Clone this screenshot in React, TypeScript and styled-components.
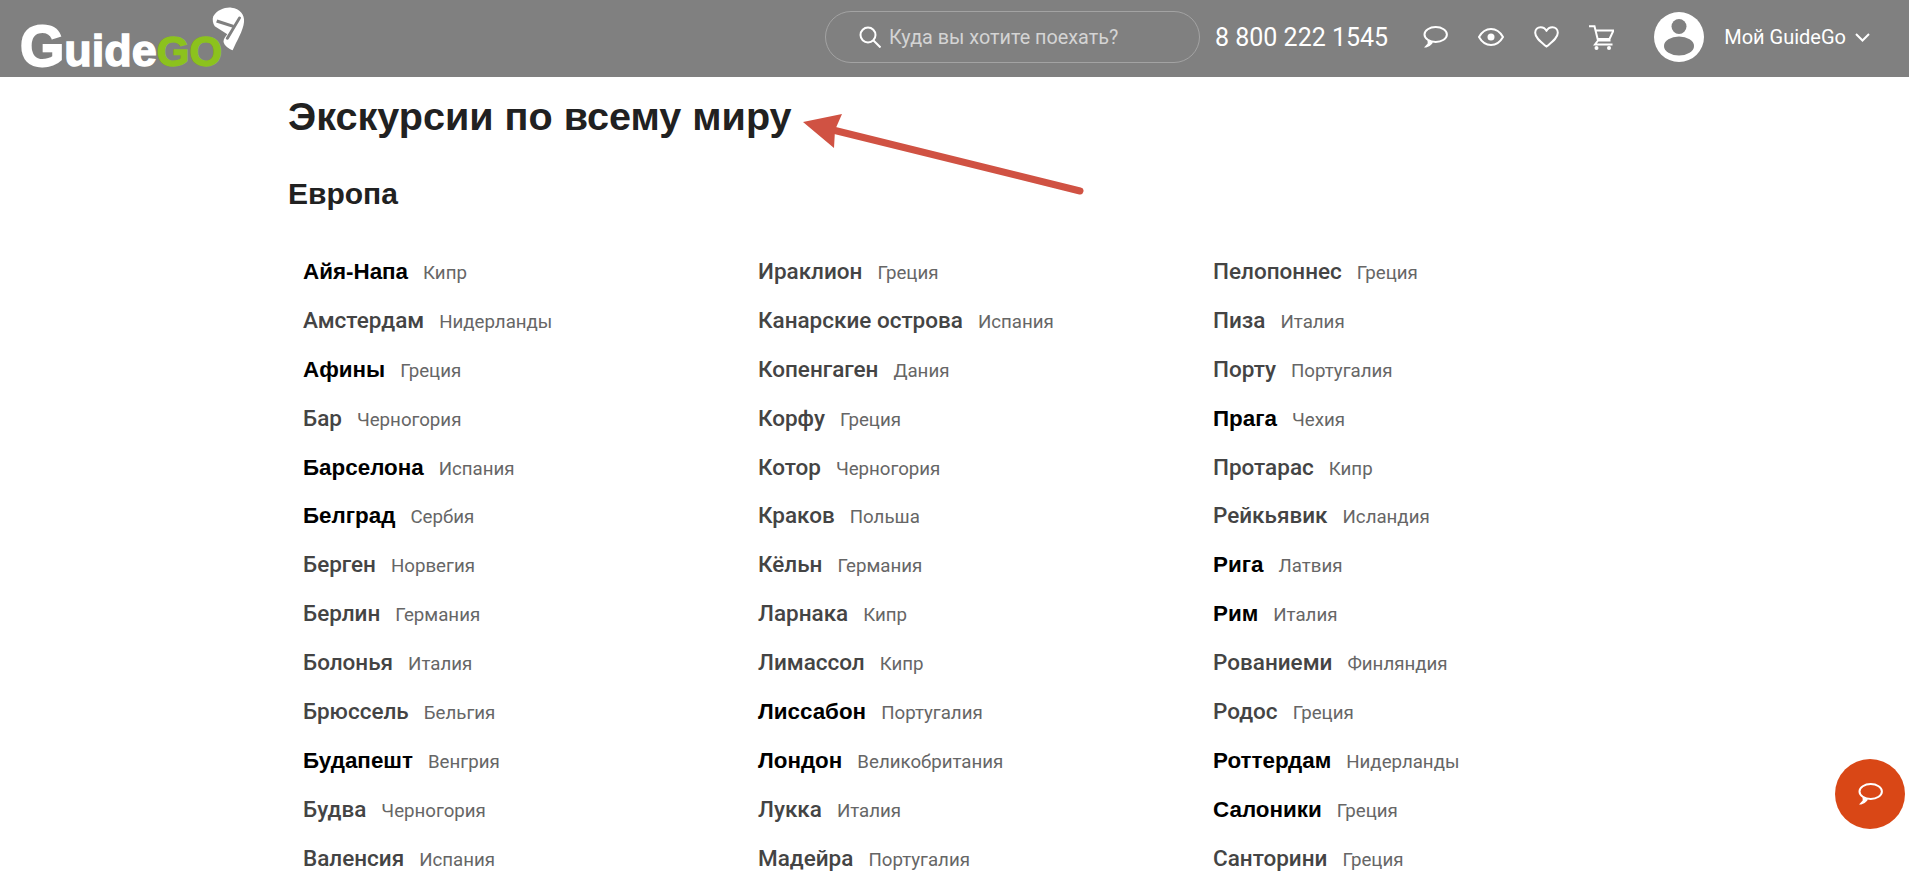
import React from 'react';
import styled, { createGlobalStyle } from 'styled-components';

const GlobalStyle = createGlobalStyle`
    html, body {
        margin: 0;
        height: 100%;
        overflow: hidden;
        background: #fff;
        font-family: Roboto, "Liberation Sans", sans-serif;
    }
`;

const Header = styled.header`
    height: 77px;
    box-sizing: border-box;
    background: #808080;
    display: flex;
    align-items: center;
    padding: 0 0 3px 20px;
    color: #fff;
`;

const Logo = styled.a`
    position: relative;
    display: flex;
    align-items: baseline;
    width: 225px;
    height: 66px;
    padding-top: 18px;
    box-sizing: border-box;
    font-family: "Liberation Sans", Arial, sans-serif;
    font-weight: 700;
    color: #fff;
`;

const LogoBig = styled.span`
    font-size: 57px;
    line-height: 48px;
    -webkit-text-stroke: 2px currentColor;
`;

const LogoSmall = styled.span<{ $green?: boolean }>`
    font-size: ${({ $green }) => ($green ? '42px' : '45px')};
    line-height: 48px;
    -webkit-text-stroke: 1.4px currentColor;
    color: ${({ $green }) => ($green ? '#8cc21d' : '#fff')};
`;

const LogoPin = styled.svg`
    position: absolute;
    left: 183px;
    top: -3px;
`;

const Search = styled.div`
    width: 375px;
    height: 52px;
    box-sizing: border-box;
    margin-left: 580px;
    border: 1px solid #a3a3a3;
    border-radius: 26px;
    display: flex;
    align-items: center;
    gap: 8px;
    padding-left: 33px;
`;

const SearchText = styled.span`
    font-size: 19.800px;
    color: #d4d4d4;
`;

const Phone = styled.span`
    margin-left: 15px;
    font-size: 25px;
    white-space: nowrap;
`;

const Icons = styled.div`
    display: flex;
    align-items: center;
    gap: 30px;
    margin-left: 35px;
`;

const Avatar = styled.svg`
    margin-left: 40px;
    flex: none;
`;

const Account = styled.span`
    margin-left: 20px;
    font-size: 20px;
    white-space: nowrap;
`;

const Chevron = styled.svg`
    margin-left: 9px;
`;

const Main = styled.main`
    width: 1320px;
    margin-left: 288px;
`;

const Title = styled.h1`
    margin: 0;
    padding-top: 15px;
    font-family: "Liberation Sans", Arial, sans-serif;
    font-size: 39.600px;
    line-height: 48px;
    font-weight: 700;
    color: #212121;
`;

const Region = styled.h2`
    margin: 0;
    padding-top: 34px;
    font-family: "Liberation Sans", Arial, sans-serif;
    font-size: 30px;
    line-height: 40px;
    font-weight: 700;
    color: #212121;
`;

const Columns = styled.div`
    display: grid;
    grid-template-columns: repeat(3, 455px);
    padding: 33px 0 0 15px;
`;

const City = styled.div`
    height: 48.900px;
    display: flex;
    align-items: baseline;
    gap: 15px;
    white-space: nowrap;
`;

const CityName = styled.a<{ $top?: boolean }>`
    font-family: ${({ $top }) => ($top ? '"Liberation Sans", Arial, sans-serif' : 'Roboto, sans-serif')};
    font-size: ${({ $top }) => ($top ? '22.400px' : '22.500px')};
    line-height: 49px;
    font-weight: ${({ $top }) => ($top ? 700 : 500)};
    color: ${({ $top }) => ($top ? '#000' : '#444')};
`;

const Country = styled.span`
    font-size: 18.700px;
    color: #666;
`;

const Arrow = styled.svg`
    position: absolute;
    left: 789px;
    top: 109px;
`;

const ChatButton = styled.button`
    position: fixed;
    right: 4px;
    bottom: 52px;
    width: 70px;
    height: 70px;
    border: 0;
    padding: 0;
    border-radius: 50%;
    background: #d94716;
    display: flex;
    align-items: center;
    justify-content: center;
`;

const Bubble = () => (
    <svg width="25" height="22" viewBox="0 0 25 22" fill="none">
        <ellipse cx="12.700" cy="8.500" rx="11.200" ry="7.400" stroke="#fff" strokeWidth="2" />
        <path d="M4.500 14L4.700 17.500 1 21.500C4 21.500 7 20.500 10 16.400z" fill="#fff" />
    </svg>
);

type Place = [string, string, boolean?];

const columns: Place[][] = [
    [
        ['Айя-Напа', 'Кипр', true],
        ['Амстердам', 'Нидерланды'],
        ['Афины', 'Греция', true],
        ['Бар', 'Черногория'],
        ['Барселона', 'Испания', true],
        ['Белград', 'Сербия', true],
        ['Берген', 'Норвегия'],
        ['Берлин', 'Германия'],
        ['Болонья', 'Италия'],
        ['Брюссель', 'Бельгия'],
        ['Будапешт', 'Венгрия', true],
        ['Будва', 'Черногория'],
        ['Валенсия', 'Испания'],
    ],
    [
        ['Ираклион', 'Греция'],
        ['Канарские острова', 'Испания'],
        ['Копенгаген', 'Дания'],
        ['Корфу', 'Греция'],
        ['Котор', 'Черногория'],
        ['Краков', 'Польша'],
        ['Кёльн', 'Германия'],
        ['Ларнака', 'Кипр'],
        ['Лимассол', 'Кипр'],
        ['Лиссабон', 'Португалия', true],
        ['Лондон', 'Великобритания', true],
        ['Лукка', 'Италия'],
        ['Мадейра', 'Португалия'],
    ],
    [
        ['Пелопоннес', 'Греция'],
        ['Пиза', 'Италия'],
        ['Порту', 'Португалия'],
        ['Прага', 'Чехия', true],
        ['Протарас', 'Кипр'],
        ['Рейкьявик', 'Исландия'],
        ['Рига', 'Латвия', true],
        ['Рим', 'Италия', true],
        ['Рованиеми', 'Финляндия'],
        ['Родос', 'Греция'],
        ['Роттердам', 'Нидерланды', true],
        ['Салоники', 'Греция', true],
        ['Санторини', 'Греция'],
    ],
];

export default function App() {
    return (
        <>
            <GlobalStyle />
            <Header>
                <Logo>
                    <LogoBig>G</LogoBig>
                    <LogoSmall>uide</LogoSmall>
                    <LogoSmall $green>GO</LogoSmall>
                    <LogoPin width="57" height="54" viewBox="0 0 150 162" preserveAspectRatio="none">
                        <path
                            d="M27 46C38 26 58 18 75 20c22 2 35 22 33 42-2 28-20 58-30 86-9-4-23-15-24-26 0-9 5-15 10-22L31 76c-5-8-7-20-4-30z"
                            fill="#fff"
                        />
                        <path d="M96 51L64 112" stroke="#808080" strokeWidth="8" strokeLinecap="round" />
                        <path d="M36 60L80 76" stroke="#808080" strokeWidth="9" />
                    </LogoPin>
                </Logo>
                <Search>
                    <svg width="22" height="22" viewBox="0 0 22 22" fill="none" stroke="#fff" strokeWidth="2">
                        <circle cx="9" cy="9" r="7.500" />
                        <path d="M14.500 14.500L21.500 21.500" />
                    </svg>
                    <SearchText>Куда вы хотите поехать?</SearchText>
                </Search>
                <Phone>8 800 222 1545</Phone>
                <Icons>
                    <Bubble />
                    <svg width="26" height="18" viewBox="0 0 26 18" fill="none" stroke="#fff" strokeWidth="2">
                        <path d="M1 9c2.800-5 7-8 12-8s9.200 3 12 8c-2.800 5-7 8-12 8S3.800 14 1 9z" />
                        <circle cx="13" cy="9" r="3.500" fill="#fff" stroke="none" />
                    </svg>
                    <svg width="25" height="22" viewBox="0 0 25 22" fill="none" stroke="#fff" strokeWidth="2" strokeLinejoin="round">
                        <path d="M12.500 20.600C7 16 1.200 12 1.200 6.800 1.200 3.500 3.600 1.200 6.600 1.200c2.500 0 4.700 1.300 5.900 3.700 1.200-2.400 3.400-3.700 5.900-3.700 3 0 5.400 2.300 5.400 5.600 0 5.200-5.800 9.200-11.300 13.800z" />
                    </svg>
                    <svg width="25" height="25" viewBox="0 0 25 25" fill="none" stroke="#fff" strokeWidth="2">
                        <path d="M0 1.200h5.500L9 15.500h12.500M6.500 5.500H24.500l-4 8.500H8.500M9 15.500L6 19.500h17.500" />
                        <circle cx="7.500" cy="23" r="2" fill="#fff" stroke="none" />
                        <circle cx="20" cy="23" r="2" fill="#fff" stroke="none" />
                    </svg>
                </Icons>
                <Avatar width="50" height="50" viewBox="0 0 50 50">
                    <circle cx="25" cy="25" r="25" fill="#fff" />
                    <circle cx="25" cy="14.500" r="7.500" fill="#808080" />
                    <ellipse cx="25" cy="34" rx="15" ry="9.500" fill="#808080" />
                </Avatar>
                <Account>Мой GuideGo</Account>
                <Chevron width="15" height="9" viewBox="0 0 15 9" fill="none" stroke="#fff" strokeWidth="2">
                    <path d="M1 1l6.500 6.500L14 1" />
                </Chevron>
            </Header>
            <Main>
                <Title>Экскурсии по всему миру</Title>
                <Region>Европа</Region>
                <Columns>
                    {columns.map((places, i) => (
                        <div key={i}>
                            {places.map(([name, country, top]) => (
                                <City key={name}>
                                    <CityName $top={top}>{name}</CityName>
                                    <Country>{country}</Country>
                                </City>
                            ))}
                        </div>
                    ))}
                </Columns>
            </Main>
            <Arrow width="310" height="90" viewBox="0 0 310 90">
                <path d="M44 21L291 82" stroke="#d05243" strokeWidth="7" strokeLinecap="round" />
                <path d="M14 13L53 5 46 21 45 39z" fill="#d05243" />
            </Arrow>
            <ChatButton>
                <Bubble />
            </ChatButton>
        </>
    );
}
